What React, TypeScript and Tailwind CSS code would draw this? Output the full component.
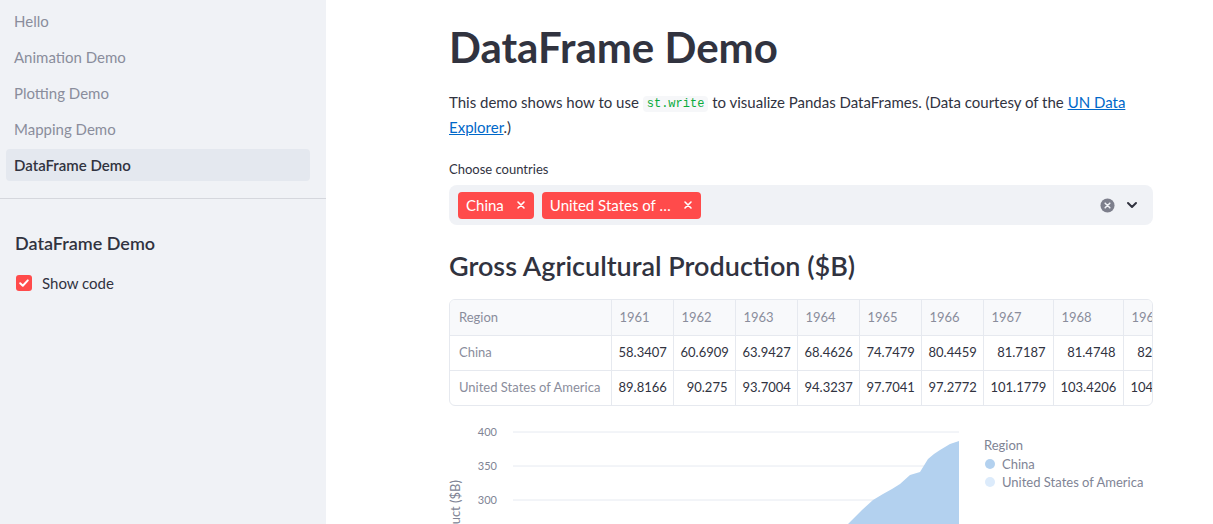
import React from 'react';

const FONT = { fontFamily: 'Lato, "Source Sans Pro", "Noto Sans", sans-serif' };

const navItems = ['Hello', 'Animation Demo', 'Plotting Demo', 'Mapping Demo', 'DataFrame Demo'];

const years = ['1961', '1962', '1963', '1964', '1965', '1966', '1967', '1968', '1969'];
const colWidths = [62, 62, 62, 62, 62, 62, 70, 70, 70];

const rows = [
    { region: 'China', values: ['58.3407', '60.6909', '63.9427', '68.4626', '74.7479', '80.4459', '81.7187', '81.4748', '82.3893'] },
    { region: 'United States of America', values: ['89.8166', '90.275', '93.7004', '94.3237', '97.7041', '97.2772', '101.1779', '103.4206', '104.2911'] },
];

function Sidebar() {
    return (
        <aside className="w-[326px] shrink-0 bg-[#f0f2f6] min-h-screen">
            <nav className="flex flex-col gap-[4px] px-[6px] pt-[5px] pr-[16px]">
                {navItems.map((item) => {
                    const active = item === 'DataFrame Demo';
                    return (
                        <div
                            key={item}
                            className={
                                active
                                    ? 'h-[32px] flex items-center px-[8px] rounded-[4px] bg-[#e4e8ef] text-[15px] text-[#31333f] font-semibold'
                                    : 'h-[32px] flex items-center px-[8px] rounded-[4px] text-[15px] text-[#8a8d9c]'
                            }
                        >
                            {item}
                        </div>
                    );
                })}
            </nav>
            <div className="mt-[17px] border-t border-[#d5d7dd]"></div>
            <div className="px-[15px]">
                <h2 className="mt-[32px] text-[18px] leading-[24px] font-semibold text-[#31333f]">DataFrame Demo</h2>
                <label className="mt-[17px] flex items-center gap-[10px] text-[15px] text-[#31333f]">
                    <span className="w-[16px] h-[16px] ml-[1px] rounded-[3px] bg-[#ff4b4b] flex items-center justify-center">
                        <svg width="12" height="12" viewBox="0 0 12 12" fill="none">
                            <path d="M2.2 6.2 L4.8 8.7 L9.8 3.4" stroke="white" strokeWidth="2" strokeLinecap="round" strokeLinejoin="round" />
                        </svg>
                    </span>
                    Show code
                </label>
            </div>
        </aside>
    );
}

function Tag({ label }: { label: string }) {
    return (
        <span className="h-[27px] flex items-center gap-[12px] pl-[8px] pr-[8px] rounded-[4px] bg-[#ff4b4b] text-white text-[15px]">
            {label}
            <svg width="10" height="10" viewBox="0 0 10 10">
                <path d="M2 2 L8 8 M8 2 L2 8" stroke="white" strokeWidth="1.6" strokeLinecap="round" />
            </svg>
        </span>
    );
}

function MultiSelect() {
    return (
        <div className="mt-[6px] h-[40px] rounded-[8px] bg-[#f0f2f6] flex items-center pl-[9px] pr-[14px]">
            <div className="flex items-center gap-[8px] flex-1">
                <Tag label="China" />
                <Tag label="United States of …" />
            </div>
            <svg width="15" height="15" viewBox="0 0 16 16">
                <circle cx="8" cy="8" r="7.5" fill="#7d7f8c" />
                <path d="M5.5 5.5 L10.5 10.5 M10.5 5.5 L5.5 10.5" stroke="#f0f2f6" strokeWidth="1.6" strokeLinecap="round" />
            </svg>
            <svg className="ml-[10px]" width="14" height="14" viewBox="0 0 14 14">
                <path d="M3 5 L7 9 L11 5" stroke="#31333f" strokeWidth="2" fill="none" strokeLinecap="round" strokeLinejoin="round" />
            </svg>
        </div>
    );
}

function DataTable() {
    return (
        <div className="mt-[15px] border border-[#e6e9ef] rounded-[6px] overflow-hidden text-[13px]">
            <table className="table-fixed border-collapse" style={{ width: 161 + colWidths.reduce((a, b) => a + b, 0) }}>
                <colgroup>
                    <col style={{ width: 161 }} />
                    {colWidths.map((w, i) => (
                        <col key={i} style={{ width: w }} />
                    ))}
                </colgroup>
                <thead>
                    <tr className="h-[35px] bg-[#f8f9fb] text-[#8a8d9c]">
                        <th className="font-normal text-left px-[9px] border-r border-b border-[#e6e9ef]">Region</th>
                        {years.map((y) => (
                            <th key={y} className="font-normal text-left px-[8px] border-r border-b border-[#e6e9ef] whitespace-nowrap">
                                {y}
                            </th>
                        ))}
                    </tr>
                </thead>
                <tbody>
                    {rows.map((r, ri) => (
                        <tr key={r.region} className="h-[35px]">
                            <td className={`px-[9px] text-[#8a8d9c] whitespace-nowrap overflow-hidden border-r border-[#e6e9ef] ${ri === 0 ? 'border-b' : ''}`}>{r.region}</td>
                            {r.values.map((v, i) => (
                                <td
                                    key={i}
                                    className={`px-[7px] text-right text-[#31333f] whitespace-nowrap border-r border-[#e6e9ef] ${ri === 0 ? 'border-b' : ''}`}
                                >
                                    {v}
                                </td>
                            ))}
                        </tr>
                    ))}
                </tbody>
            </table>
        </div>
    );
}

function Chart() {
    // chart origin: page x 449, page y 420
    const ox = 449;
    const oy = 420;
    const pts: [number, number][] = [
        [848, 524], [862, 510], [873, 500], [883, 494], [892, 489], [900, 484], [910, 475], [920, 472],
        [928, 459], [934, 454], [940, 450], [950, 444], [959, 441], [959, 524],
    ];
    const d = 'M' + pts.map(([x, y]) => `${x - ox} ${y - oy}`).join(' L') + ' Z';
    return (
        <div className="mt-[14px] h-[200px]">
            <svg width="704" height="200" viewBox="0 0 704 200" style={FONT}>
                {[12, 46, 80, 114, 148].map((y) => (
                    <line key={y} x1={64} x2={510} y1={y} y2={y} stroke="#e6eaf1" strokeWidth="1" />
                ))}
                {['400', '350', '300', '250', '200'].map((t, i) => (
                    <text key={t} x={48} y={12 + i * 34 + 4} textAnchor="end" fontSize="11" fill="#808495">
                        {t}
                    </text>
                ))}
                <text x={11} y={60} fontSize="13" fill="#808495" transform="rotate(-90 11 60)" textAnchor="end">
                    Gross Agricultural Product ($B)
                </text>
                <path d={d} fill="#b3d1ef" />
                <text x={535} y={30} fontSize="13" fill="#808495">Region</text>
                <circle cx={541} cy={44} r={5} fill="#b3d1ef" />
                <text x={553} y={49} fontSize="13" fill="#808495">China</text>
                <circle cx={541} cy={62} r={5} fill="#dcebfb" />
                <text x={553} y={67} fontSize="13" fill="#808495">United States of America</text>
            </svg>
        </div>
    );
}

export default function App() {
    return (
        <div className="flex w-full min-h-screen bg-white overflow-hidden" style={FONT}>
            <Sidebar />
            <main className="flex-1 h-[524px] overflow-hidden">
                <div className="ml-[123px] w-[704px]">
                    <h1 className="mt-[21px] text-[42px] leading-[52px] font-bold text-[#31333f]">DataFrame Demo</h1>
                    <p className="mt-[17px] text-[15px] leading-[25px] text-[#31333f]">
                        This demo shows how to use{' '}
                        <code className="px-[4px] py-[1px] rounded-[4px] bg-[#f6f7f9] text-[#09ab3b] text-[12px] leading-[14px] align-[1px]" style={{ fontFamily: '"Liberation Mono", monospace' }}>
                            st.write
                        </code>{' '}
                        to visualize Pandas DataFrames. (Data courtesy of the{' '}
                        <a className="text-[#0068c9] underline" href="#">
                            UN Data Explorer
                        </a>
                        .)
                    </p>
                    <div className="mt-[19px] text-[13px] leading-[20px] text-[#31333f]">Choose countries</div>
                    <MultiSelect />
                    <h3 className="mt-[23px] text-[27px] leading-[36px] font-semibold text-[#31333f]">Gross Agricultural Production ($B)</h3>
                    <DataTable />
                    <Chart />
                </div>
            </main>
        </div>
    );
}
